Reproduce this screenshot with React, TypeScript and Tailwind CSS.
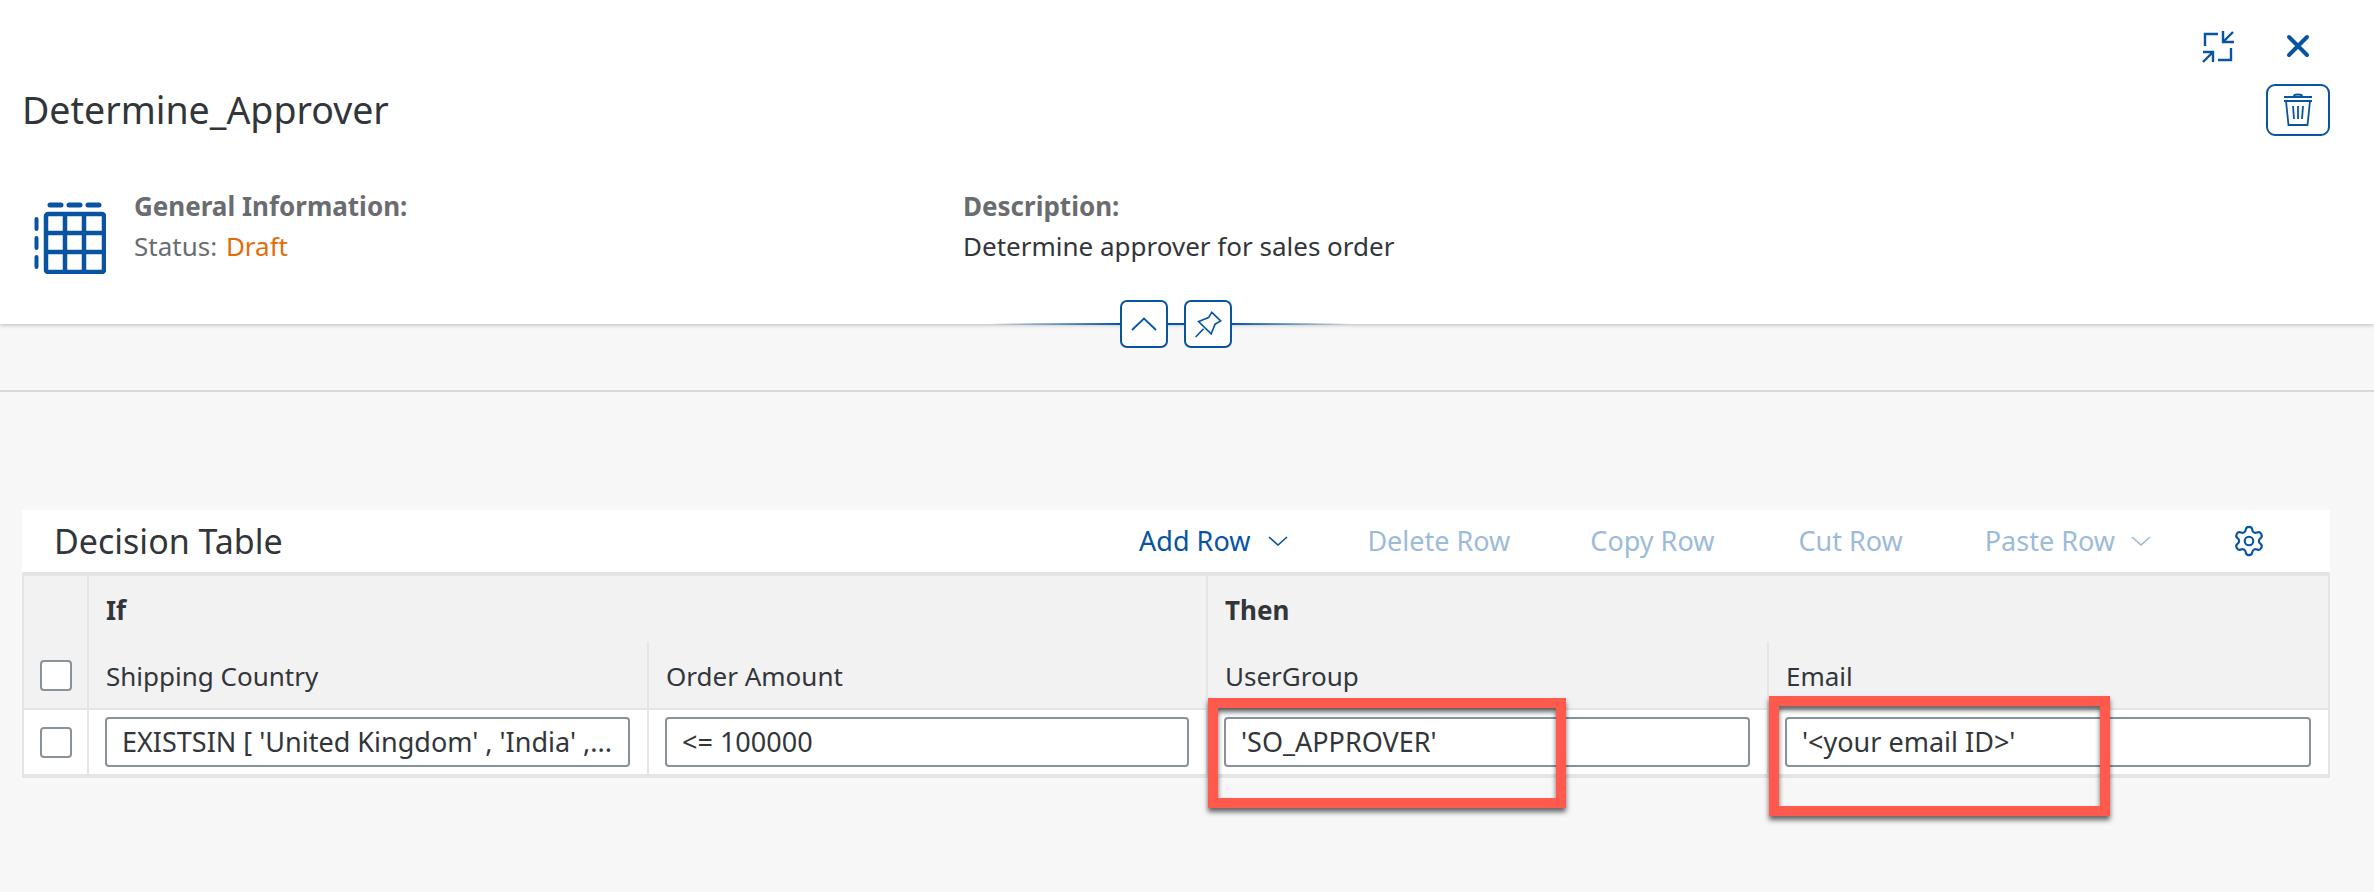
import { Settings } from "lucide-react"

const font = { fontFamily: '"Noto Sans", sans-serif' }

const ChevronDown = ({ light }: { light?: boolean }) => (
  <svg width="20" height="10" viewBox="0 0 20 10" fill="none" stroke={light ? "#9cbbd9" : "#0854a0"} strokeWidth="1.6">
    <path d="M1 1l9 8 9-8" />
  </svg>
)

const TableIcon = () => (
  <svg width="72" height="72" viewBox="0 0 72 72" fill="none" stroke="#0854a0">
    <path d="M16 3h11M35 3h11M54 3h11" strokeWidth="5" strokeLinecap="round" />
    <path d="M2.500 17v10M2.500 36v10M2.500 55v10" strokeWidth="4" strokeLinecap="round" />
    <rect x="12" y="12" width="58" height="58" rx="2" strokeWidth="4.500" />
    <path d="M31 12v58M50 12v58M12 31h58M12 50h58" strokeWidth="4.500" />
  </svg>
)

const ToolbarButton = ({ label, className }: { label: string; className: string }) => (
  <span className={`text-[27px] text-[#9cbbd9] ${className}`}>{label}</span>
)

const Cell = ({ value }: { value: string }) => (
  <div className="flex h-[66px] items-center border-l-2 border-t-2 border-[#e5e5e5] bg-white pl-[16px] pr-[17px]">
    <div className="flex h-[50px] w-full items-center truncate rounded-[4px] border-2 border-[#89919a] bg-white px-[15px] text-[27px] text-[#32363a]">
      {value}
    </div>
  </div>
)

const ColumnHead = ({ label }: { label: string }) => (
  <div className="flex h-[66px] items-center border-l-2 border-[#e5e5e5] px-[17px] pt-[2px] text-[26px] text-[#32363a]">{label}</div>
)

const GroupHead = ({ label }: { label: string }) => (
  <div className="col-span-2 flex h-[66px] items-center border-l-2 border-[#e5e5e5] px-[17px] pt-[2px] text-[26px] font-bold text-[#32363a]">{label}</div>
)

const Checkbox = () => <div className="h-[31px] w-[32px] rounded-[4px] border-2 border-[#89919a] bg-white" />

export default function App() {
  return (
    <div className="relative h-[892px] w-full overflow-hidden bg-[#f7f7f7]" style={font}>
      <header className="relative h-[324px] bg-white shadow-[0_1px_4px_rgba(0,0,0,0.25)]">
        <div className="flex h-[190px] justify-between pl-[22px] pr-[44px]">
          <h1 className="pt-[84px] text-[37.500px] leading-[52px] text-[#32363a]">Determine_Approver</h1>
          <div className="flex flex-col items-end pt-[29px]">
            <div className="flex items-start">
              <svg width="34" height="36" viewBox="102 28 34 36" fill="none" stroke="#0854a0" strokeWidth="2.400">
                <path d="M118 33h-13v12M133 31l-10 10M123 30v11h11M103 61l10-10M103 51h10v10M131 47v12h-13" />
              </svg>
              <svg className="ml-[49px] mr-[19px] mt-[4px]" width="26" height="26" viewBox="0 0 26 26" fill="none" stroke="#0854a0" strokeWidth="4" strokeLinecap="round">
                <path d="M4 4l18 18M22 4L4 22" />
              </svg>
            </div>
            <button className="mt-[19px] flex h-[52px] w-[64px] items-center justify-center rounded-[9px] border-2 border-[#0854a0]">
              <svg width="30" height="34" viewBox="183 93 30 34" fill="none" stroke="#0854a0" strokeWidth="1.800">
                <path d="M184 97h28M184 101h28M194 96c0-2 8-2 8 0" />
                <path d="M186 101l2.500 24h19l2.500-24M193 106l1 13M198 106v13M203 106l-1 13" />
              </svg>
            </button>
          </div>
        </div>
        <div className="flex pl-[34px]">
          <div className="mt-[12px]">
            <TableIcon />
          </div>
          <div className="-mt-[4px] ml-[28px] w-[829px] text-[26px] leading-[40px] text-[#6a6d70]">
            <div className="font-bold">General Information:</div>
            <div>
              Status: <span className="ml-[2px] text-[#e26c0c]">Draft</span>
            </div>
          </div>
          <div className="-mt-[4px] text-[26px] leading-[40px]">
            <div className="font-bold text-[#6a6d70]">Description:</div>
            <div className="text-[#32363a]">Determine approver for sales order</div>
          </div>
        </div>
        <div className="absolute left-[990px] top-[300px] flex w-[360px] items-center">
          <div className="h-[2px] w-[130px] bg-gradient-to-r from-transparent to-[#0854a0]" />
          <button className="flex h-[48px] w-[48px] items-center justify-center rounded-[7px] border-2 border-[#0854a0] bg-white">
            <svg width="26" height="14" viewBox="0 0 26 14" fill="none" stroke="#0854a0" strokeWidth="1.800">
              <path d="M1 13L13 1.500 25 13" />
            </svg>
          </button>
          <div className="h-[2px] w-[16px] bg-[#0854a0]" />
          <button className="flex h-[48px] w-[48px] items-center justify-center rounded-[7px] border-2 border-[#0854a0] bg-white">
            <svg width="27" height="27" viewBox="735 88 80 82" fill="none" stroke="#0854a0" strokeWidth="5">
              <path d="M785 92l27 26-17 10-12 29-38-37 30-12zM760 142l-24 25" />
            </svg>
          </button>
          <div className="h-[2px] flex-1 bg-gradient-to-r from-[#0854a0] to-transparent" />
        </div>
      </header>

      <div className="mt-[66px] h-[2px] bg-[#d9d9d9]" />

      <section className="ml-[22px] mr-[44px] mt-[118px]">
        <div className="flex h-[62px] items-center bg-white pl-[32px] pr-[64px]">
          <h2 className="text-[34px] text-[#32363a]">Decision Table</h2>
          <span className="ml-auto text-[27px] text-[#0854a0]">Add Row</span>
          <span className="ml-[18px]">
            <ChevronDown />
          </span>
          <ToolbarButton label="Delete Row" className="ml-[79px]" />
          <ToolbarButton label="Copy Row" className="ml-[80px]" />
          <ToolbarButton label="Cut Row" className="ml-[84px]" />
          <ToolbarButton label="Paste Row" className="ml-[82px]" />
          <span className="ml-[16px]">
            <ChevronDown light />
          </span>
          <Settings className="ml-[81px]" size={34} strokeWidth={1.5} color="#0854a0" />
        </div>
        <div className="grid grid-cols-[63px_560px_559px_561px_561px] border-x-2 border-b-4 border-t-4 border-[#e5e5e5] bg-[#f2f2f2]">
          <div className="row-span-2 flex items-end justify-center pb-[17px]">
            <Checkbox />
          </div>
          <GroupHead label="If" />
          <GroupHead label="Then" />
          <ColumnHead label="Shipping Country" />
          <ColumnHead label="Order Amount" />
          <ColumnHead label="UserGroup" />
          <ColumnHead label="Email" />
          <div className="flex h-[66px] items-center justify-center border-t-2 border-[#e5e5e5] bg-white">
            <Checkbox />
          </div>
          {["EXISTSIN [ 'United Kingdom' , 'India' ,...", "<= 100000", "'SO_APPROVER'", "'<your email ID>'"].map((value) => (
            <Cell key={value} value={value} />
          ))}
        </div>
      </section>

      {/* annotation boxes drawn over the table */}
      <div className="absolute left-[1208px] top-[698px] h-[110px] w-[358px] border-[10px] border-[#ff5a4d] shadow-[0_4px_5px_rgba(0,0,0,0.6),inset_0_4px_5px_rgba(0,0,0,0.6)]" />
      <div className="absolute left-[1769px] top-[696px] h-[120px] w-[341px] border-[10px] border-[#ff5a4d] shadow-[0_4px_5px_rgba(0,0,0,0.6),inset_0_4px_5px_rgba(0,0,0,0.6)]" />
    </div>
  )
}
